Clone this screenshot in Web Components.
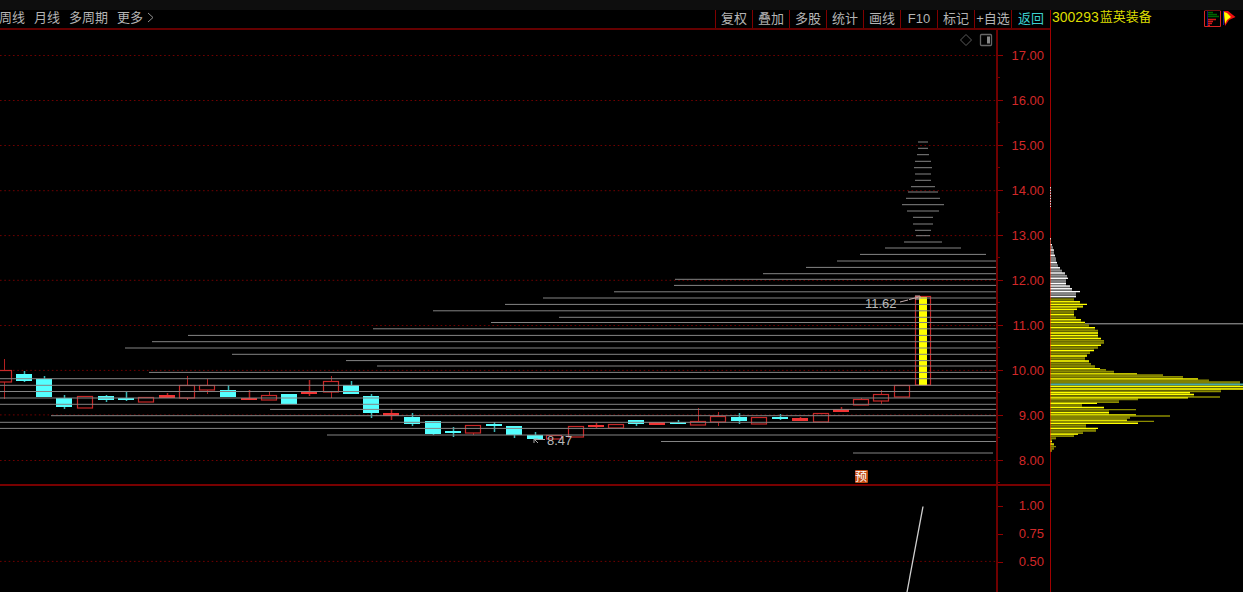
<!DOCTYPE html>
<html lang="zh-CN">
<head>
<meta charset="utf-8">
<title>300293 蓝英装备</title>
<style>
html,body{margin:0;background:#000}
body{min-height:100vh;overflow:hidden;font:13px/18px "Liberation Sans","Noto Sans CJK SC",sans-serif;color:#b4b4b4;
--frame:#a00000;--axis:#d22828}
</style>
</head>
<body>
<stock-app></stock-app>
<script>
const define = (name, html, setup) => customElements.define(name, class extends HTMLElement {
  constructor() {
    super();
    this.attachShadow({mode: 'open'}).innerHTML = html;
  }
  connectedCallback() { if (setup) setup(this, this.shadowRoot); }
});

define('period-nav', `<style>
:host{display:block}
nav{display:flex;gap:9px;margin-left:-1px;line-height:16px}
a{color:#b4b4b4;text-decoration:none;white-space:nowrap}
.more{display:flex;align-items:center;gap:4px}
</style>
<nav aria-label="周期"><a href="#week">周线</a><a href="#month">月线</a><a href="#multi">多周期</a><a class="more" href="#more">更多<svg width="8" height="12" viewBox="0 0 8 12" aria-hidden="true"><path d="M1 1L6 5.500L1 10" fill="none" stroke="#909090"/></svg></a></nav>`);

define('tool-button', `<style>
:host{display:flex;flex:0 0 37px;border-left:1px solid #800000;box-sizing:border-box}
:host([active]){flex-basis:39px;color:#3cd0d0}
button{flex:1;min-width:0;padding:0;border:0;background:none;color:inherit;font:inherit;line-height:16px;white-space:nowrap;display:flex;justify-content:center;align-items:center}
</style><button type="button"><slot></slot></button>`);

define('chart-header', `<style>
:host{display:flex;justify-content:space-between;height:18px;border-bottom:2px solid #640000}
.tools{display:flex}
</style><period-nav></period-nav>
<div class="tools"><tool-button>复权</tool-button><tool-button>叠加</tool-button><tool-button>多股</tool-button><tool-button>统计</tool-button><tool-button>画线</tool-button><tool-button>F10</tool-button><tool-button>标记</tool-button><tool-button>+自选</tool-button><tool-button active>返回</tool-button></div>`);

define('value-axis', `<style>
:host{display:block;border-left:2px solid #700000;box-sizing:border-box;overflow:hidden;color:var(--axis)}
ul{list-style:none;margin:0;padding:3px 0 0}
li{display:flex;align-items:center;height:45px;justify-content:space-between;padding-right:6px;position:relative}
li::before{content:"";width:5px;height:1px;background:#900000}
li::after{content:"";position:absolute;left:0;bottom:0;width:2px;height:1px;background:#700000}
:host([dense]) ul{padding-top:6px}
:host([dense]) li{height:28px}
:host([dense]) li::after{display:none}
</style><ul></ul>`, (el, root) => {
  root.querySelector('ul').innerHTML = el.getAttribute('values').split(' ').map(v => `<li>${v}</li>`).join('');
});

// Horizontal support levels: y, start x, end x.
const LEVELS = [[142,918,928],[148.3,918,928],[154.7,917,929],[161.3,915,931],[167.7,914,932],[174,915,931],[180.3,915,931],[186.7,911,935],[192,908,938],[198.3,906,940],[204.7,902,944],[211,907,939],[217.3,913,933],[224,913,933],[230.3,915,931],[235.7,916,930],[242,904,942],[248,885,961],[254.4,860,986],[261,837],[267.4,806],[273.7,763],[279.3,675],[285.4,674],[291.8,614],[298,543],[304.4,505],[310.8,433],[317.3,559],[322.5,491],[328.8,373],[335.4,188],[341.7,152],[348,125],[354.3,232],[360.6,346],[366,377],[372.4,149],[378.7,0],[385.3,0],[391.5,0],[398,0],[404.3,0],[409.4,270],[415.7,51],[422.3,0],[428.4,0],[435,327],[441.5,661],[453,853,993]];
// Candles: type, x, top, bottom, high, low. c = falling, r = rising outline, f = rising solid.
const CANDLES = [['r',-4,370,382,359,399],['c',16,374,381,371,382],['c',36,379,397,376,397],['c',56,398,407,395,409],['r',77,396,408],['c',98,396,400,395,402],['c',118,398,400,391,401],['r',138,397,402],['f',159,395,398,393,398],['r',179,385,398,376,400],['r',199,385,390,379,394],['c',220,390,397,385,397],['f',241,398,400,390,400],['r',261,395,400,391,400],['c',281,394,404],['f',301,391,394,380,396],['r',323,381,392,376,398],['c',343,385,394,381,394],['c',363,396,413,394,418],['f',383,413,416,409,420],['c',404,417,424,413,426],['c',425,421,434,421,435],['c',445,431,433,427,437],['r',465,425,433,425,435],['c',486,424,426,422,432],['c',506,426,435,426,438],['c',527,435,439,432,439],['r',546,435,439],['r',568,426,437],['f',588,425,427,423,428],['r',608,424,428],['c',628,420,424,420,426],['f',649,422,425],['c',670,422,424,420,424],['r',690,421,425,408,425],['r',710,416,422,412,426],['c',731,417,421,413,424],['r',751,417,424],['c',772,417,419,414,420],['f',792,418,421,417,421],['r',813,413,422],['f',833,409,412,407,412],['r',853,399,405,398,405],['r',873,394,401,390,404],['r',894,385,397],['r',915,296,385]];
const grid = ys => ys.map(y => `<path d="M0 ${y}H996" stroke="#700000" stroke-dasharray="1.600 2.720"/>`).join('');

define('price-chart', `<style>
:host{display:block;position:relative;min-width:0;overflow:hidden}
svg{display:block;width:100%;height:100%}
text{font:13px "Liberation Sans",sans-serif;fill:#b8b8b8}
.corner{position:absolute;top:3px;right:3px;display:flex;gap:6px}
.corner button{border:0;padding:0;background:none;display:block;width:14px;height:14px}
.note{font:12px "Noto Sans CJK SC",sans-serif;fill:#fff}
</style><svg class="plot" viewBox="0 30 996 454" preserveAspectRatio="xMaxYMin slice" role="img" aria-label="K线图"></svg>
<div class="corner"><button type="button" aria-label="标记点"><svg viewBox="0 0 14 14"><path d="M7 1.500L12.500 7L7 12.500L1.500 7Z" fill="none" stroke="#5c5c5c"/></svg></button><button type="button" aria-label="侧栏"><svg viewBox="0 0 14 14"><rect x="1.500" y="1.500" width="11" height="11" rx="1" fill="none" stroke="#666" stroke-width="1.300"/><path d="M8 3.500h3v7H8z" fill="#888"/></svg></button></div>`, (el, root) => {
  let s = grid([55.5,100.5,145.5,190.7,235.6,280.3,325.5,370.4,414.9,460.5]);
  for (const [k,x,t,b,h,l] of CANDLES) {
    const c = k === 'c' ? '#54ffff' : k === 'f' ? '#f03434' : '#c82828';
    if (h !== undefined) {
      const wick = k === 'c' ? '#38b8b8' : '#b42020', cx = x + 8;
      s += k === 'r'
        ? `<path d="M${cx}.5 ${h}V${t}M${cx}.5 ${b}V${Math.max(l, b)}" stroke="${wick}"/>`
        : `<path d="M${cx}.5 ${h}V${l}" stroke="${wick}" stroke-width="1.500"/>`;
    }
    s += k === 'r' ? `<rect x="${x + .5}" y="${t + .5}" width="15" height="${b - t - .5}" fill="none" stroke="${c}" stroke-width="1.200"/>`
      : `<rect x="${x}" y="${t}" width="16" height="${b - t}" fill="${c}"/>`;
  }
  s += '<rect x="919" y="297" width="8" height="88" fill="#ff0"/>';
  s += LEVELS.map(([y,a,b = 996]) => `<path d="M${a} ${y}H${b}" stroke="#848484"/>`).join('');
  s += `<path d="M900 302L908 300M909 299.500L919 297M915 296h5v3h-5" stroke="#c8b0b0" fill="none"/><text x="865" y="308">11.62</text>
  <path d="M545 439.500H534M534 443V439H538M534 439l4 4" stroke="#aaa" fill="none"/><text x="547" y="445">8.47</text>
  <rect x="855" y="470" width="13" height="13" rx="1" fill="#c24c14"/><text class="note" x="855" y="481">预</text>`;
  root.querySelector('.plot').innerHTML = s;
});

define('signal-chart', `<style>:host{display:block;min-width:0;overflow:hidden}svg{display:block;width:100%;height:100%}</style>
<svg viewBox="0 486 996 106" preserveAspectRatio="xMaxYMin slice" role="img" aria-label="指标线">${grid([561.4])}<path d="M907 592L923 506.500" stroke="#d0d0d0" stroke-width="1.300"/></svg>`);

// Chip distribution rows: y, length, brightness (1 = bright).
const WHITE = [[239,1,1],[242,1,0],[244.7,2,1],[247,3,0],[250,4,1],[252.7,4,0],[255.3,5,1],[258,6,0],[260,6,0],[262.5,7,1],[265,8,0],[267.7,10,1],[270.3,12,0],[273,15,1],[275.6,17,0],[278.3,18,1],[281,16,0],[283.5,16,1],[286,20,1],[288.7,22,1],[291.6,30,1],[294,26,0],[296.7,26,1]];
const YELLOW = [[299,24,0],[301.7,30,1],[304.3,37,1],[306.8,33,1],[309.4,27,1],[312,24,0],[314.6,24,1],[317.2,26,0],[319.7,31,1],[322.4,35,1],[325,39,0],[327.7,45,1],[330.3,48,0],[333,48,1],[335.6,48,1],[338.3,51,1],[340.7,54,0],[343,54,0],[345.3,51,1],[348,48,0],[350.6,44,1],[353.3,40,0],[356,37,1],[358.3,35,0],[361,39,1],[363.7,41,0],[366,45,0],[368.6,50,1],[369.6,56,0],[371.3,64,0],[374,87,1],[375,113,0],[376.6,133,0],[379,148,1],[380.2,159,0],[382,190,0],[386.3,193,1],[389,193,1],[391.6,171,0],[392.6,140,1],[394.4,144,1],[397,170,0],[397.8,138,1],[399.6,88,0],[402.3,69,0],[403.3,47,1],[405,32,0],[407.4,54,1],[409.7,86,0],[412.6,59,1],[415,86,1],[416,120,0],[418,80,0],[420.3,77,1],[421.3,104,0],[423.4,88,1],[425.7,36,0],[428.4,48,1],[431,46,0],[433.3,33,0],[434.2,28,1],[436.3,24,0],[438.7,6,0],[441.3,2,1],[444,4,1],[446.6,6,0],[449,4,0],[451,2,0]];
define('chip-distribution', `<style>:host{display:block;overflow:hidden}svg{display:block;width:100%;height:100%}</style>
<svg viewBox="0 30 193 562" preserveAspectRatio="xMinYMin slice" role="img" aria-label="筹码分布"></svg>`, (el, root) => {
  const rows = (list, dim, bright) => {
    let s = '';
    list.forEach(([y,w], i) => {
      const next = list[i + 1];
      if (next) s += `<rect y="${y}" width="${Math.min(w, next[1])}" height="${next[0] - y}" fill="${dim}" opacity=".7"/>`;
    });
    return s + list.map(([y,w,hot]) => `<path d="M0 ${y}H${w}" stroke="${hot ? bright : dim}" stroke-width="1.300"/>`).join('');
  };
  root.querySelector('svg').innerHTML = `<path d="M.5 187V207" stroke="#ddd" stroke-dasharray="1.500 1.200"/><path d="M35 323.800H193" stroke="#aaa"/>`
    + rows(WHITE, '#929292', '#fff') + rows(YELLOW, '#8c8c00', '#ff0')
    + '<path d="M0 384.400H193" stroke="#48a8a8" stroke-width="1.600"/><path d="M.5 239V452" stroke="#e02000" opacity=".5"/>';
});

define('stock-title', `<style>
:host{display:flex;justify-content:space-between;align-items:start;height:20px;line-height:14px;color:#dcdc00}
h1{font:inherit;margin:0;padding-left:2px;display:flex;gap:1px}
.code{font-size:14px}
.actions{display:flex;gap:1px;padding-right:7px}
button{display:block;border:0;padding:0;background:none;height:18px}
svg{display:block}
</style><h1><span class="code">300293</span><span>蓝英装备</span></h1>
<div class="actions"><button type="button" aria-label="筹码"><svg width="19" height="18" viewBox="0 0 19 18"><path d="M1.500 1V16.500H17.500V1" fill="none" stroke="#d82424"/><path d="M1.500 .5H17.500" stroke="#701010"/><path d="M4.500 1V16" stroke="#101070"/><path d="M5 2.500h5M5 4.500h9M5 6.500h11" stroke="#006400" stroke-width="1.600"/><path d="M5 9.500h8M5 11.500h5M5 13.500h4M5 15.500h2" stroke="#d01818" stroke-width="1.400"/></svg></button>
<button type="button" aria-label="播放"><svg width="13" height="18" viewBox="0 0 13 18"><path d="M1 1L5 1L12.500 7L6 10L2 16Z" fill="#f01010"/><path d="M1 2L4 3L8 7L4 10L2 14Z" fill="#ff0"/><path d="M.5 1V15" stroke="#1818a0"/></svg></button></div>`);

define('stock-app', `<style>
:host{display:block}
.strip{height:10px;background:#0e0e0e}
main{display:grid;grid-template-columns:minmax(0,1fr) 192px}
.left{border-right:1px solid var(--frame)}
.row{display:grid;grid-template-columns:minmax(0,1fr) 54px}
.price{height:454px;border-bottom:2px solid #780000}
.signal{height:106px}
aside{display:grid;grid-template-rows:20px 562px;margin-left:-1px}
</style><div class="strip"></div>
<main><section class="left"><chart-header></chart-header>
<div class="row price"><price-chart></price-chart><value-axis values="17.00 16.00 15.00 14.00 13.00 12.00 11.00 10.00 9.00 8.00"></value-axis></div>
<div class="row signal"><signal-chart></signal-chart><value-axis dense values="1.00 0.75 0.50"></value-axis></div></section>
<aside><stock-title></stock-title><chip-distribution></chip-distribution></aside></main>`);
</script>
</body>
</html>
